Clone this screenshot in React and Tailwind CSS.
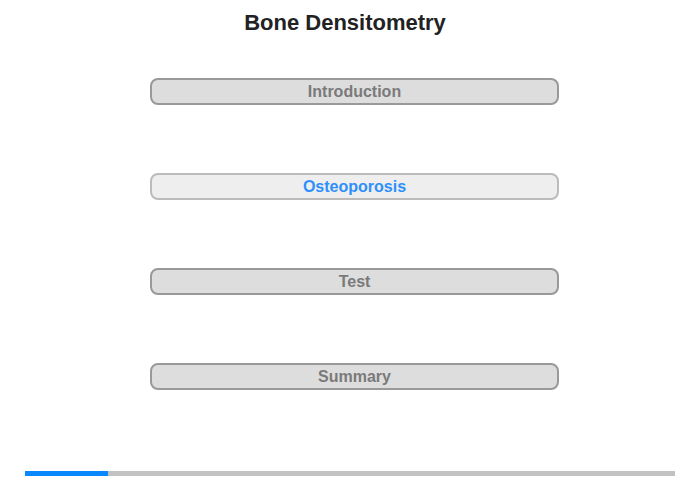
// Bone Densitometry — chapter menu with a progress bar along the bottom.

const CHAPTERS = [
  { id: 'intro', label: 'Introduction' },
  { id: 'osteo', label: 'Osteoporosis', active: true },
  { id: 'test', label: 'Test' },
  { id: 'summary', label: 'Summary' },
]

function ChapterButton({ label, active }) {
  return (
    <button
      type="button"
      className={`flex h-[27px] w-[409px] items-center justify-center rounded-[8px] border-2 text-[16px] font-bold leading-none ${
        active
          ? 'border-[#bbbbbb] bg-[#eeeeee] text-[#2e90fa]'
          : 'border-[#999999] bg-[#dddddd] text-[#7a7a7a]'
      }`}
    >
      {label}
    </button>
  )
}

export default function App() {
  return (
    <div
      className="h-[480px] w-[700px] overflow-hidden bg-white"
      style={{ fontFamily: '"Liberation Sans", Arial, sans-serif' }}
    >
      <h1 className="w-[690px] pt-[10px] text-center text-[22px] font-bold leading-[26px] text-[#222222]">
        Bone Densitometry
      </h1>

      <div className="ml-[150px] mt-[42px] flex flex-col gap-[68px]">
        {CHAPTERS.map((c) => (
          <ChapterButton key={c.id} label={c.label} active={c.active} />
        ))}
      </div>

      {/* progress */}
      <div className="ml-[25px] mt-[81px] flex h-[5px] w-[650px] bg-[#c2c2c2]">
        <div className="h-full w-[83px] bg-[#0a88ff]" />
      </div>
    </div>
  )
}
